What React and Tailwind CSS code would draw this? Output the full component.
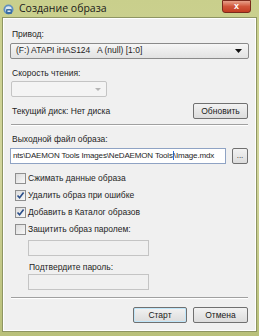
import React from 'react';

function Check({ checked }) {
    return (
        <span className="w-[11px] h-[11px] border border-[#8f8f8f] bg-gradient-to-br from-[#dcdcdc] to-[#f8f8f8] flex items-center justify-center shrink-0">
            {checked && (
                <svg width="9" height="9" viewBox="0 0 9 9">
                    <path d="M1.5 4.5 L3.6 6.8 L7.6 1.5" fill="none" stroke="#2a4e8a" strokeWidth="1.6" />
                </svg>
            )}
        </span>
    );
}

function Btn({ children, className = '' }) {
    return (
        <div className={`h-[16px] rounded-[2px] border border-[#707070] bg-gradient-to-b from-[#f2f2f2] to-[#dcdcdc] flex items-center justify-center text-[#1a1a1a] ${className}`}>
            {children}
        </div>
    );
}

export default function App() {
    return (
        <div
            className="w-[259px] h-[336px] bg-gradient-to-b from-[#c9cf8c] via-[#d2d59c] to-[#b9c07a] relative overflow-hidden flex flex-col"
            style={{ fontFamily: '"Liberation Sans", Arial, sans-serif' }}
        >
            {/* Title bar */}
            <div className="h-[18px] flex items-center pl-[3px] shrink-0">
                <svg width="11" height="11" viewBox="0 0 11 11" className="shrink-0">
                    <circle cx="5.5" cy="5.5" r="5" fill="#5f8fbf" />
                    <circle cx="5.5" cy="5.5" r="3.2" fill="#dce8f2" />
                    <rect x="3" y="5" width="6" height="5" rx="1" fill="#3b6ea5" />
                    <rect x="4.5" y="6.5" width="3" height="1.5" fill="#dce8f2" />
                </svg>
                <span className="ml-[5px] text-[10.5px] text-[#1a1a1a] leading-none mt-[-2px]" style={{ fontFamily: '"Open Sans", sans-serif' }}>Создание образа</span>
            </div>
            <div className="absolute top-0 left-[222px] w-[29px] h-[13px] rounded-b-[3px] border border-[#7a2a1c] bg-gradient-to-b from-[#e7a08a] via-[#d0553a] to-[#c33d22] flex items-center justify-center">
                <span className="text-white text-[9px] font-bold leading-none">x</span>
            </div>

            {/* Client area */}
            <div className="mx-[3px] h-[313px] bg-[#f0f0f0] border border-[#ffffff] outline outline-[#8e9563] flex flex-col px-[6px] text-[8.5px] text-[#1e1e1e] leading-none">
                <div className="mt-[11px] ml-[2px]">Привод:</div>
                <div className="mt-[4px] h-[16px] border border-[#8a8a8a] rounded-[2px] bg-gradient-to-b from-[#f6f6f6] to-[#e2e2e2] flex items-center pl-[5px] pr-[6px]">
                    <span className="flex-1 whitespace-pre">(F:) ATAPI iHAS124   A (null) [1:0]</span>
                    <svg width="7" height="4" viewBox="0 0 7 4"><path d="M0 0 H7 L3.5 4 Z" fill="#111" /></svg>
                </div>

                <div className="mt-[10px] ml-[2px]">Скорость чтения:</div>
                <div className="mt-[4px] ml-[1px] w-[96px] h-[16px] border border-[#c4c4c4] rounded-[2px] bg-[#f4f4f4] flex items-center justify-end pr-[5px]">
                    <svg width="6" height="3" viewBox="0 0 6 3"><path d="M0 0 H6 L3 3 Z" fill="#b5b5b5" /></svg>
                </div>

                <div className="mt-[6px] flex items-center justify-between">
                    <span className="ml-[2px]">Текущий диск: Нет диска</span>
                    <Btn className="w-[55px] mr-[1px]">Обновить</Btn>
                </div>

                <div className="mt-[5px] h-[2px] border-t border-[#a0a0a0] border-b border-b-white mx-[1px]" />

                <div className="mt-[9px] ml-[2px]">Выходной файл образа:</div>
                <div className="mt-[4px] flex items-center">
                    <div className="w-[216px] h-[16px] border border-[#8fa3c4] bg-white flex items-center overflow-hidden pl-[2px]">
                        <span className="whitespace-nowrap text-[8px] tracking-[-0.15px]">nts\DAEMON Tools Images\NeDAEMON Tools<span className="inline-block w-[1px] h-[9px] bg-[#2a6bd8] align-middle" />\Image.mdx</span>
                    </div>
                    <Btn className="ml-[6px] w-[16px] h-[15px] text-[8px] items-end pb-[3px]">...</Btn>
                </div>

                <div className="mt-[9px] flex flex-col gap-[6px] ml-[5px]">
                    <div className="flex items-center gap-[2px]"><Check /><span>Сжимать данные образа</span></div>
                    <div className="flex items-center gap-[2px]"><Check checked /><span>Удалить образ при ошибке</span></div>
                    <div className="flex items-center gap-[2px]"><Check checked /><span>Добавить в Каталог образов</span></div>
                    <div className="flex items-center gap-[2px]"><Check /><span>Защитить образ паролем:</span></div>
                </div>

                <div className="mt-[5px] ml-[18px] w-[121px] h-[16px] border border-[#c4c4c4] bg-[#f0f0f0]" />
                <div className="mt-[7px] ml-[19px]">Подтвердите пароль:</div>
                <div className="mt-[3px] ml-[18px] w-[121px] h-[16px] border border-[#c4c4c4] bg-[#f0f0f0]" />

                <div className="mt-[7px] h-[2px] border-t border-[#a0a0a0] border-b border-b-white mx-[1px]" />

                <div className="mt-[8px] flex justify-end gap-[6px] mr-[1px]">
                    <Btn className="w-[54px] border-[#3c7fb1] from-[#eaf6fd] to-[#c6e4f6] shadow-[inset_0_0_0_1px_#bfe6fa]">Старт</Btn>
                    <Btn className="w-[55px]">Отмена</Btn>
                </div>
            </div>
        </div>
    );
}
